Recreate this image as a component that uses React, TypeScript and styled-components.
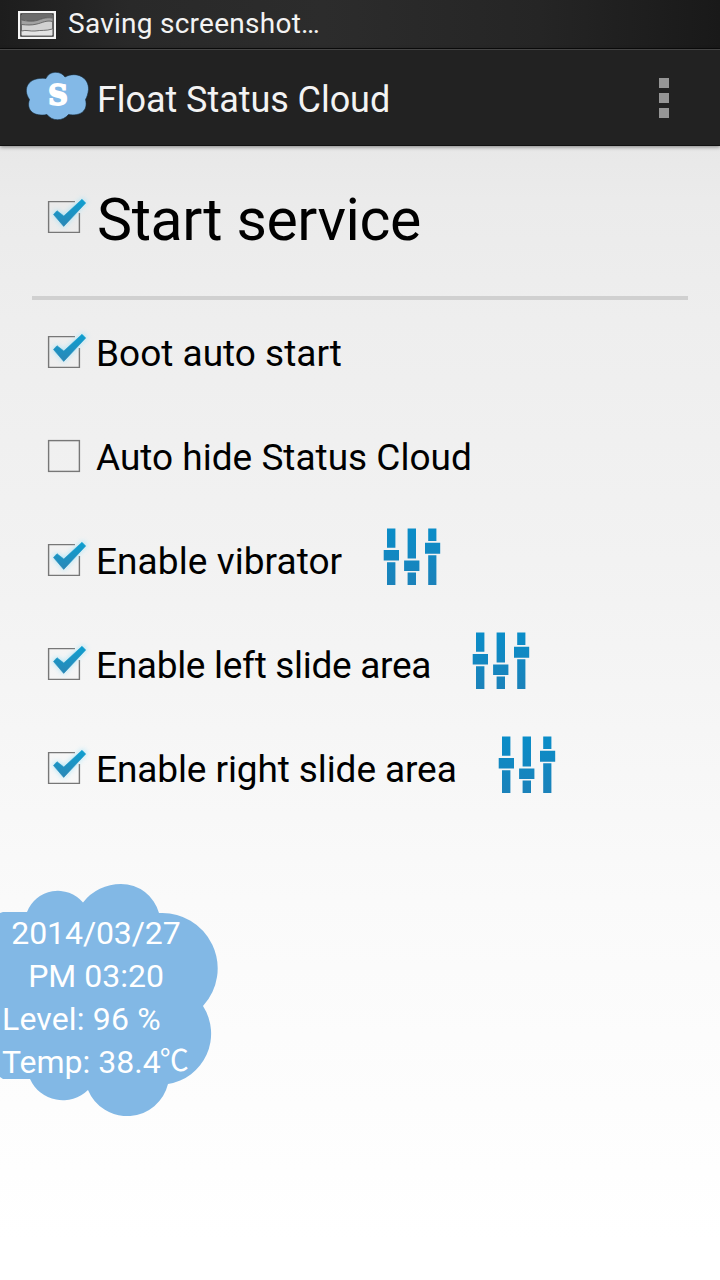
import React from "react";
import styled, { createGlobalStyle } from "styled-components";

const GlobalStyle = createGlobalStyle`
  * { box-sizing: border-box; }
  body { margin: 0; font-family: Roboto, "Noto Sans", sans-serif; }
`;

const Screen = styled.div`
  position: relative;
  display: flex;
  flex-direction: column;
  width: 720px;
  height: 1280px;
  overflow: hidden;
  white-space: nowrap;
  background: linear-gradient(#e8e8e8 146px, #ebebeb 200px, #eeeeee 320px, #f2f2f2 560px, #fafafa 900px, #ffffff 1240px);
`;

const StatusBar = styled.header`
  display: flex;
  align-items: center;
  gap: 12px;
  height: 49px;
  padding: 2px 0 0 18px;
  color: #f3f3f3;
  background: linear-gradient(90deg, #1d1d1d, #292929 18%, #2c2c2c 45%, #252525 75%, #191919);
  border-bottom: 1px solid #0c0c0c;
`;

const ActionBar = styled.header`
  display: flex;
  align-items: center;
  height: 97px;
  padding: 0 50px 0 24px;
  color: #f3f3f3;
  background: #222222;
  border-top: 1px solid #454545;
  border-bottom: 1px solid #121212;
  box-shadow: 0 1px 4px rgba(0, 0, 0, 0.45);
`;

const StatusText = styled.span`
  padding-bottom: 2px;
  font-size: 28px;
  line-height: 1.2;
  letter-spacing: 0.26px;
`;

const Label = styled.span<{ $size: number; $spacing?: number; $drop?: number; $indent?: number }>`
  font-size: ${(p) => p.$size}px;
  line-height: 1.2;
  letter-spacing: ${(p) => p.$spacing ?? 0}px;
  padding-top: ${(p) => p.$drop ?? 0}px;
  padding-left: ${(p) => p.$indent ?? 0}px;
`;

const AppTitle = styled.h1`
  flex: 1;
  margin: 0 0 0 7px;
  padding-top: 5px;
  font-size: 36px;
  font-weight: 400;
  letter-spacing: -0.06px;
`;

const Overflow = styled.div`
  display: grid;
  gap: 5px;
  margin-right: 1px;
`;

const Dot = styled.i`
  width: 10px;
  height: 10px;
  background: #969696;
`;

const Settings = styled.main`
  display: flex;
  flex-direction: column;
`;

const Row = styled.label<{ $height: number }>`
  display: flex;
  align-items: center;
  height: ${(p) => p.$height}px;
  padding-left: 40px;
  color: #000;
`;

const Divider = styled.hr`
  width: 656px;
  height: 4px;
  margin: 8px 32px 0;
  border: 0;
  background: #d0d0d0;
`;

const BoxIcon = styled.svg`
  width: 48px;
  height: 48px;
  margin-right: 8px;
  overflow: visible;
`;

const SlidersIcon = styled.svg`
  width: 64px;
  height: 64px;
  margin: 0 0 7px 38px;
`;

const FloatingCloud = styled.aside`
  position: absolute;
  left: 0;
  top: 884px;
  width: 218px;
  height: 232px;
`;

const CloudShape = styled.svg`
  position: absolute;
  inset: 0;
`;

const CloudText = styled.div`
  position: relative;
  display: flex;
  flex-direction: column;
  width: 190px;
  padding: 28px 0 0 2px;
  color: #fff;
`;

const CloudLine = styled.span<{ $center?: boolean; $spacing?: number }>`
  height: 43px;
  font-size: 32px;
  line-height: 43px;
  letter-spacing: ${(p) => p.$spacing ?? 0}px;
  text-align: ${(p) => (p.$center ? "center" : "left")};
`;

const Degree = styled.span`
  font-family: "Noto Sans CJK SC", sans-serif;
  font-size: 29px;
  font-weight: 400;
  line-height: 1;
  margin-left: -1px;
  vertical-align: 2px;
`;

const Check = ({ checked }: { checked: boolean }) => (
  <BoxIcon viewBox="0 0 48 48">
    <defs>
      <linearGradient id="tick" x1="0" y1="0" x2="0" y2="1">
        <stop offset="0" stopColor="#0d9fd0" />
        <stop offset="1" stopColor="#2b87b6" />
      </linearGradient>
      <filter id="glow" x="-40%" y="-40%" width="180%" height="180%">
        <feGaussianBlur stdDeviation="2.6" />
      </filter>
    </defs>
    {checked ? (
      <>
        <path d="M35 8.6H8.6V39.4H39.4V20" fill="none" stroke="#777" strokeWidth="1.4" />
        <path d="M13.3 21L16.7 18L24 22.7L42.7 6L45.7 9.3L23.7 33Z" fill="#9fe2f8" stroke="#9fe2f8" strokeWidth="2" opacity=".75" filter="url(#glow)" />
        <path d="M13.5 21.5L17 17.7L23.800 23L42 6.300L45.700 10L23.700 33.400Z" fill="url(#tick)" stroke="url(#tick)" strokeWidth=".6" strokeLinejoin="round" />
      </>
    ) : (
      <rect x="8.6" y="8.6" width="30.8" height="30.8" fill="none" stroke="#777" strokeWidth="1.4" />
    )}
  </BoxIcon>
);

const Sliders = () => (
  <SlidersIcon viewBox="0 0 64 64">
    <defs>
      <linearGradient id="bar" gradientUnits="userSpaceOnUse" x1="0" y1="3" x2="0" y2="60">
        <stop offset="0" stopColor="#0a8dc8" />
        <stop offset="1" stopColor="#1b82ba" />
      </linearGradient>
    </defs>
    <g fill="url(#bar)">
      <path d="M7 3.5h8.4v19.3H7zM7 37.3h8.4V60H7zM3.7 25h15.3v10.5H3.7z" />
      <path d="M27.6 3.5H36v30h-8.4zM27.6 47.5H36V60h-8.4zM24.1 35.5h15.3v10.6H24.1z" />
      <path d="M48.2 3.5h8.2V16h-8.2zM48.2 30.2h8.2V60h-8.2zM45 17.8h15.2v10.9H45z" />
    </g>
  </SlidersIcon>
);

const PictureIcon = () => (
  <svg width="38" height="28" viewBox="0 0 38 28">
    <rect width="38" height="28" fill="#f5f5f5" />
    <rect x="2.3" y="2.3" width="33.4" height="23.4" fill="#222" />
    <rect x="3.6" y="3.6" width="30.8" height="20.8" fill="#d2d2d2" />
    <path d="M3.6 3.6H34.4V7C27 6 24 8 19 9.5C13 11 9 10 3.6 9Z" fill="#6c6c6c" />
    <path d="M3.6 9C9 10 13 11 19 9.5C24 8 27 6 34.4 7V10.500C28 9 24 12 19 13C13 14.500 9 14 3.6 13.500Z" fill="#a2a2a2" />
    <path d="M3.6 20C8 18.500 12 20.500 17 20C23 19 28 20 34.400 18V24.400H3.600Z" fill="#e4e4e4" />
    <path d="M3.6 9C9 10 13 11 19 9.5C24 8 27 6 34.4 7M3.6 13.500C9 14 13 14.500 19 13C24 12 28 9 34.400 10.500M3.600 20C8 18.500 12 20.500 17 20C23 19 28 20 34.400 18" fill="none" stroke="#555" strokeWidth=".8" />
  </svg>
);

const LogoIcon = () => (
  <svg width="66" height="52" viewBox="0 0 66 52">
    <path d="M22 6.500C25-1.500 37-1.500 41 5C52-1 65 5 64.500 17.500C64 22 63 25 61.500 27.500C64.500 39 56 44.500 44.500 42.500C39 49.500 28 49.500 23 42.500C11 45 1.500 39 5.500 27.500C-2 17 4 4.500 22 6.500Z" fill="#83b9e7" stroke="#142a3a" strokeWidth=".6" />
    <text x="34" y="32.500" textAnchor="middle" fontFamily="DejaVu Serif, serif" fontWeight="700" fontSize="27" fill="#fff" stroke="#fff" strokeWidth="1.8">S</text>
  </svg>
);

const options = [
  { text: "Boot auto start", checked: true, spacing: 0 },
  { text: "Auto hide Status Cloud", checked: false, spacing: 0 },
  { text: "Enable vibrator", checked: true, spacing: 0.07, adjustable: true },
  { text: "Enable left slide area", checked: true, spacing: -0.3, adjustable: true },
  { text: "Enable right slide area", checked: true, spacing: -0.1, adjustable: true },
];

export default function App() {
  return (
    <>
      <GlobalStyle />
      <Screen>
        <StatusBar>
          <PictureIcon />
          <StatusText>Saving screenshot…</StatusText>
        </StatusBar>
        <ActionBar>
          <LogoIcon />
          <AppTitle>Float Status Cloud</AppTitle>
          <Overflow><Dot /><Dot /><Dot /></Overflow>
        </ActionBar>
        <Settings>
          <Row $height={142}>
            <Check checked />
            <Label $size={59} $spacing={-0.4} $drop={6} $indent={1}>Start service</Label>
          </Row>
          <Divider />
          {options.map((o) => (
            <Row key={o.text} $height={104}>
              <Check checked={o.checked} />
              <Label $size={37} $spacing={o.spacing} $drop={4}>{o.text}</Label>
              {o.adjustable && <Sliders />}
            </Row>
          ))}
        </Settings>
        <FloatingCloud>
          <CloudShape width="218" height="232" viewBox="0 884 218 232">
            <path d="M0 913L3 912H27A33 33 0 0 1 83 902.5A48.3 48.3 0 0 1 121 884A39.4 39.4 0 0 1 159 913A55.5 55.5 0 0 1 203 1006A51 51 0 0 1 168 1084A42.2 42.2 0 0 1 88 1090A36 36 0 0 1 30 1079H3L0 1077Z" fill="#82b8e5" />
          </CloudShape>
          <CloudText>
            <CloudLine $center $spacing={-0.1}>2014/03/27</CloudLine>
            <CloudLine $center>PM 03:20</CloudLine>
            <CloudLine $spacing={0.15}>Level: 96 %</CloudLine>
            <CloudLine>Temp: 38.4<Degree>℃</Degree></CloudLine>
          </CloudText>
        </FloatingCloud>
      </Screen>
    </>
  );
}
